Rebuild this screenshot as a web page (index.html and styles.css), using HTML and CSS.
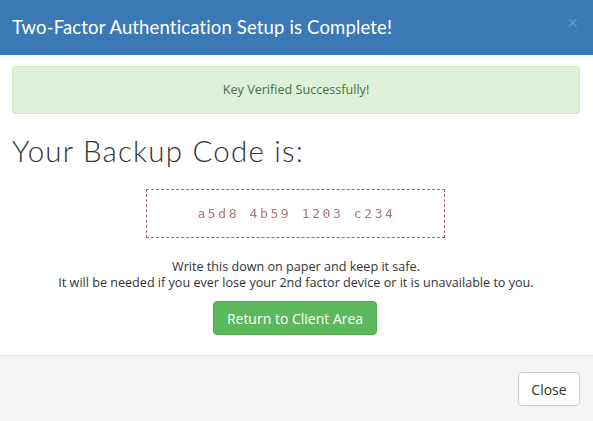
FILE: index.html
```html
<!DOCTYPE html>
<html>
<head>
<meta charset="utf-8">
<link rel="stylesheet" href="styles.css">
</head>
<body>
<div class="modal">
  <div class="modal-header">
    <h4 class="modal-title">Two-Factor Authentication Setup is Complete!</h4>
    <span class="close-x">×</span>
  </div>
  <div class="modal-body">
    <div class="alert">Key Verified Successfully!</div>
    <h2 class="title">Your Backup Code is:</h2>
    <div class="code-wrap">
      <div class="code">a5d8 4b59 1203 c234</div>
    </div>
    <p class="note">Write this down on paper and keep it safe.<br>It will be needed if you ever lose your 2nd factor device or it is unavailable to you.</p>
    <div class="btn-row"><button class="btn-green">Return to Client Area</button></div>
  </div>
  <div class="modal-footer">
    <button class="btn-default">Close</button>
  </div>
</div>
</body>
</html>
```
FILE: styles.css
```css
* { box-sizing: border-box; }
html, body { margin: 0; padding: 0; background: #fff; }
body { font-family: "Open Sans", "Liberation Sans", sans-serif; color: #333; width: 593px; height: 421px; overflow: hidden; }
.modal { display: flex; flex-direction: column; height: 421px; }
.modal-header { background: #3b79b6; height: 55px; display: flex; align-items: center; justify-content: space-between; padding: 0 12px 2px 12px; }
.modal-title { margin: 0; font-family: "Lato", "Liberation Sans", sans-serif; font-weight: 400; font-size: 18.5px; color: #fff; letter-spacing: 0.15px; }
.close-x { color: #6f96c2; font-size: 19px; line-height: 1; margin-right: 3px; margin-top: -8px; font-family: "Liberation Sans", sans-serif; }
.modal-body { padding: 11px 13px 0 12px; flex: 1; }
.alert { background: #dff0d8; border: 1px solid #d6e9c6; border-radius: 3px; color: #3c763d; text-align: center; font-size: 12.6px; height: 48px; line-height: 46px; }
.title { margin: 19px 0 0 0; font-family: "Lato", "Liberation Sans", sans-serif; font-weight: 300; font-size: 29.5px; color: #333; line-height: 36px; letter-spacing: 1.2px; }
.code-wrap { display: flex; justify-content: center; margin-top: 20px; padding-right: 1px; }
.code { width: 299px; height: 49px; border: 1px dashed #8a4e4e; display: flex; align-items: center; justify-content: center; font-family: "DejaVu Sans Mono", monospace; font-size: 13px; color: #9a6060; letter-spacing: 2.6px; filter: blur(0.6px); opacity: 0.85; padding-left: 2px; }
.note { margin: 21px 0 0 0; text-align: center; font-size: 12.6px; line-height: 16px; color: #333; }
.btn-row { display: flex; justify-content: center; margin-top: 10px; padding-right: 2px; }
.btn-green { background: #5cb85c; border: 1px solid #4cae4c; border-radius: 4px; color: #fff; font-family: "Open Sans", sans-serif; font-size: 14px; width: 164px; height: 34px; padding: 0; }
.modal-footer { border-top: 1px solid #e5e5e5; background: #f4f4f4; height: 66px; display: flex; justify-content: flex-end; align-items: flex-start; padding: 16px 13px 0 0; }
.btn-default { background: #fff; border: 1px solid #ccc; border-radius: 4px; color: #333; font-family: "Open Sans", sans-serif; font-size: 14px; width: 62px; height: 34px; padding: 0; }
```
